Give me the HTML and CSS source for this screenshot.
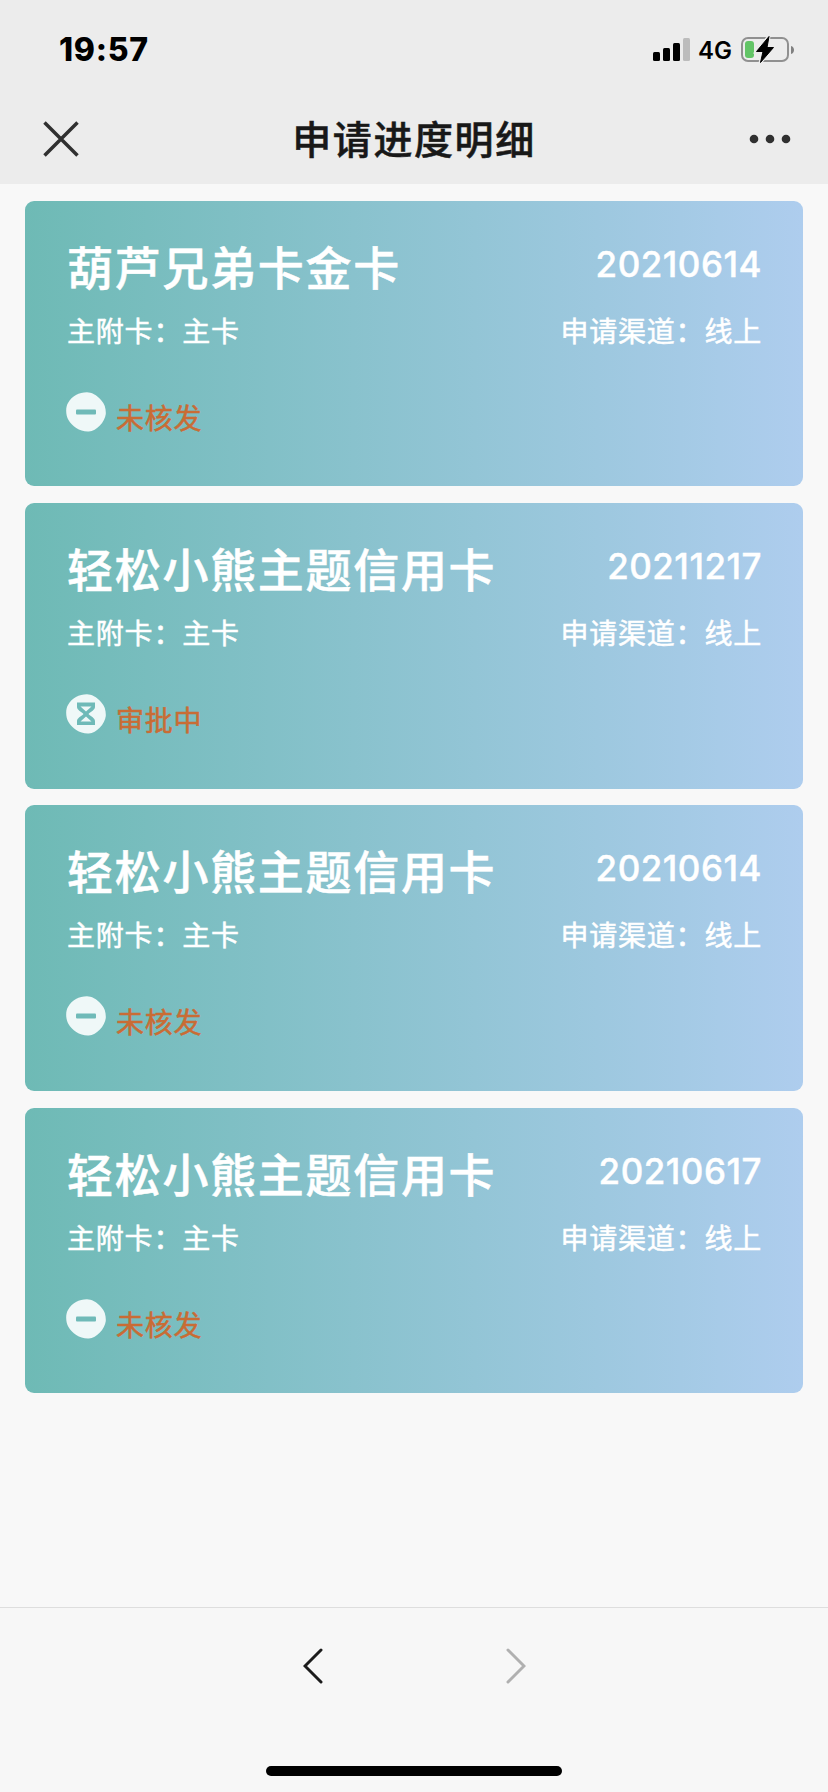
FILE: index.html
```html
<!DOCTYPE html>
<html lang="zh-CN">

<head>
    <meta charset="utf-8">
    <title>申请进度明细</title>
    <link rel="stylesheet" href="styles.css">
</head>

<body>
    <!-- shared icons -->
    <svg class="sprite">
        <symbol id="refused" viewBox="0 0 40 40">
            <path d="M21 .3C25 .3 31 3 35 8c4 4 5 9 4.800 14-1 8-9 17-17 17.500C14 40 6 34 2.500 28-.5 23-.5 15 2 11 6 4 13 .3 21 .3z" fill="#eff8f8"/>
            <rect x="10" y="17.500" width="20" height="5" rx="1" fill="#6fbab8"/>
        </symbol>
        <symbol id="waiting" viewBox="0 0 40 40">
            <path d="M21 .3C25 .3 31 3 35 8c4 4 5 9 4.800 14-1 8-9 17-17 17.500C14 40 6 34 2.500 28-.5 23-.5 15 2 11 6 4 13 .3 21 .3z" fill="#eff8f8"/>
            <path d="M11 8.500h18v4.500c0 3-4 4.500-6.500 7 2.500 2.500 6.500 4 6.500 7v4H11v-4c0-3 4-4.500 6.500-7-2.500-2.500-6.500-4-6.500-7z" fill="#6fbab8"/>
            <path d="M14.500 12.500h11L20 17.500zM14.500 27.500h11L20 22.500z" fill="#eff8f8"/>
        </symbol>
    </svg>

    <div class="page">
        <div class="top">
            <div class="status">
                <span class="time">19:57</span>
                <div class="signal">
                    <svg width="37" height="24" viewBox="0 0 37 24">
                        <rect x="0" y="14" width="7" height="9" rx="1.500"/>
                        <rect x="10" y="10" width="7" height="13" rx="1.500"/>
                        <rect x="20" y="5" width="7" height="18" rx="1.500"/>
                        <rect x="30" y="0" width="7" height="23" rx="1.500" fill="#bcbcbc"/>
                    </svg>
                    <span class="net">4G</span>
                    <svg width="54" height="28" viewBox="0 0 54 28">
                        <rect x="1" y="2" width="46" height="23" rx="6" fill="none" stroke="#909090" stroke-width="2"/>
                        <path d="M50 10c4 1 4 7 0 8z" fill="#808080"/>
                        <rect x="4" y="5" width="9" height="17" rx="3" fill="#62c466"/>
                        <path d="M28 0L15 16h6.500L19 27 33 11h-6.500z" stroke="#ececec" stroke-width="3"/>
                        <path d="M28 .5L15.500 15.500h6.500L19.500 26.500 32.500 11.500h-6.500z" stroke="#000" stroke-linejoin="round"/>
                    </svg>
                </div>
            </div>
            <div class="nav">
                <svg class="close" width="36" height="36" viewBox="0 0 36 36">
                    <path d="M1.500 1.500l33 33M34.500 1.500l-33 33" stroke="#303030" stroke-width="3.500"/>
                </svg>
                <h1>申请进度明细</h1>
                <svg class="more" width="42" height="10" viewBox="0 0 42 10" fill="#303030">
                    <circle cx="5" cy="5" r="4.300"/>
                    <circle cx="21" cy="5" r="4.300"/>
                    <circle cx="37" cy="5" r="4.300"/>
                </svg>
            </div>
        </div>

        <div class="list">
            <div class="card">
                <div class="row">
                    <h2>葫芦兄弟卡金卡</h2>
                    <span class="date">20210614</span>
                </div>
                <div class="row info">
                    <span>主附卡：主卡</span>
                    <span>申请渠道：线上</span>
                </div>
                <div class="state">
                    <svg width="40" height="40"><use href="#refused"/></svg>
                    <span>未核发</span>
                </div>
            </div>
            <div class="card">
                <div class="row">
                    <h2>轻松小熊主题信用卡</h2>
                    <span class="date">20211217</span>
                </div>
                <div class="row info">
                    <span>主附卡：主卡</span>
                    <span>申请渠道：线上</span>
                </div>
                <div class="state">
                    <svg width="40" height="40"><use href="#waiting"/></svg>
                    <span>审批中</span>
                </div>
            </div>
            <div class="card">
                <div class="row">
                    <h2>轻松小熊主题信用卡</h2>
                    <span class="date">20210614</span>
                </div>
                <div class="row info">
                    <span>主附卡：主卡</span>
                    <span>申请渠道：线上</span>
                </div>
                <div class="state">
                    <svg width="40" height="40"><use href="#refused"/></svg>
                    <span>未核发</span>
                </div>
            </div>
            <div class="card">
                <div class="row">
                    <h2>轻松小熊主题信用卡</h2>
                    <span class="date">20210617</span>
                </div>
                <div class="row info">
                    <span>主附卡：主卡</span>
                    <span>申请渠道：线上</span>
                </div>
                <div class="state">
                    <svg width="40" height="40"><use href="#refused"/></svg>
                    <span>未核发</span>
                </div>
            </div>
        </div>

        <div class="bottom">
            <div class="arrows">
                <svg width="20" height="36" viewBox="0 0 20 36">
                    <path d="M18 2L2 18l16 16" fill="none" stroke="#1c1c1c" stroke-width="3" stroke-linecap="round"/>
                </svg>
                <svg width="20" height="36" viewBox="0 0 20 36">
                    <path d="M2 2l16 16L2 34" fill="none" stroke="#b0b0b0" stroke-width="3" stroke-linecap="round"/>
                </svg>
            </div>
            <div class="home"></div>
        </div>
    </div>
</body>

</html>
```
FILE: styles.css
```css
* {
    box-sizing: border-box;
}
body {
    margin: 0;
    background-color: #f8f8f8;
    font-family: "Noto Sans CJK SC", sans-serif;
}
h1, h2 {
    margin: 0;
    font-weight: 500;
    -webkit-text-stroke: .5px;
}
svg {
    display: block;
    flex: none;
}
.sprite {
    display: none;
}
.page {
    display: flex;
    flex-direction: column;
    height: 1792px;
}

/* status bar and title */
.top {
    height: 184px;
    background-color: #ececec;
}
.status {
    display: flex;
    justify-content: space-between;
    align-items: center;
    height: 100px;
    padding: 0 33px 0 59px;
    font-family: Inter, sans-serif;
}
.time {
    margin-top: -2px;
    font-size: 32px;
    font-weight: 800;
    letter-spacing: .7px;
}
.signal {
    display: flex;
    align-items: center;
}
.net {
    margin: 2px 9px 0 8px;
    font-size: 24px;
    font-weight: 600;
    line-height: 28px;
}
.nav {
    display: flex;
    justify-content: space-between;
    align-items: center;
    height: 78px;
    padding: 0 37px 0 43px;
}
.nav h1 {
    margin-top: -4px;
    color: #181818;
    font-size: 39px;
    letter-spacing: 1.6px;
}

/* application cards */
.list {
    display: flex;
    flex: 1;
    flex-direction: column;
    gap: 16.8px;
    padding: 17px 25px 0;
}
.card {
    height: 285.4px;
    padding: 36px 41px 0;
    border-radius: 9px;
    background-image: linear-gradient(to right, #6ebab5, #aecdee);
    color: #fff;
}
.row {
    display: flex;
    justify-content: space-between;
    padding-left: 1px;
}
.card h2 {
    font-size: 46px;
    line-height: 56px;
    letter-spacing: 1.7px;
}
.date {
    padding-top: 4px;
    font-family: Inter, sans-serif;
    font-size: 35px;
    font-weight: 500;
    line-height: 46px;
    letter-spacing: .5px;
    -webkit-text-stroke: .4px;
}
.info, .state {
    font-size: 28px;
    line-height: 40px;
    letter-spacing: .8px;
    -webkit-text-stroke: .5px;
}
.info {
    margin-top: 17px;
}
.state {
    display: flex;
    gap: 10px;
    margin-top: 42px;
    color: #c96c35;
}
.state span {
    padding-top: 5px;
}

/* browser toolbar */
.bottom {
    display: flex;
    flex-direction: column;
    justify-content: space-between;
    align-items: center;
    height: 185px;
    padding: 40px 0 16px;
    border-top: 1px solid #dedede;
    background-color: #f7f7f7;
}
.arrows {
    display: flex;
    gap: 183px;
}
.home {
    width: 296px;
    height: 10px;
    border-radius: 5px;
    background-color: #000;
}
```
